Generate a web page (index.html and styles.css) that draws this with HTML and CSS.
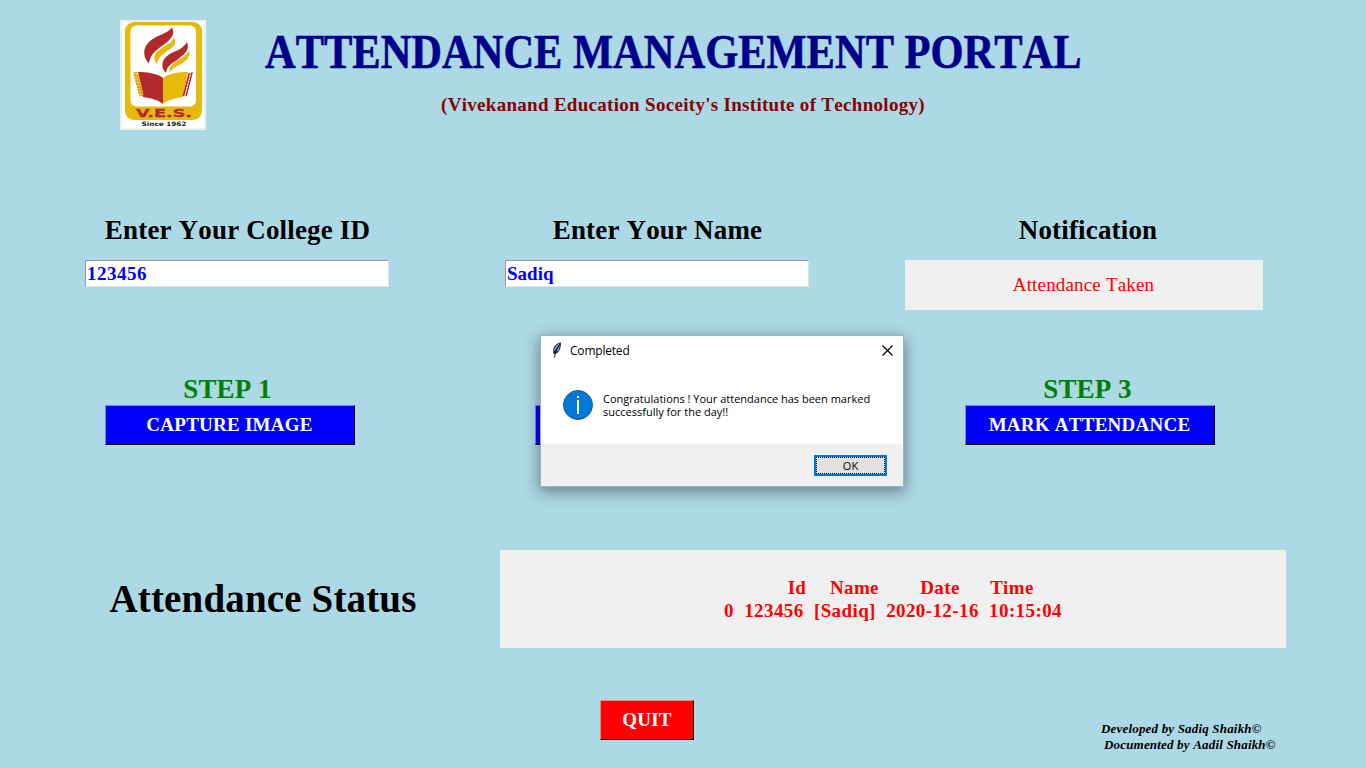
FILE: index.html
```html
<!DOCTYPE html>
<html lang="en">
<head>
<meta charset="utf-8">
<title>Attendance Management Portal</title>
<link rel="stylesheet" href="styles.css">
</head>
<body>
<main class="portal">
  <header class="header">
    <svg class="logo" viewBox="0 0 86 110" role="img" aria-label="V.E.S. Since 1962">
      <rect width="86" height="110" fill="#f0f0f0"/>
      <rect x="2" y="2" width="82" height="106" fill="#fff"/>
      <rect x="5" y="2" width="77" height="98" rx="9" fill="#e7ba09"/>
      <rect x="10.500" y="5.500" width="65.500" height="81" rx="6" fill="#fff"/>
      <g fill="#b3282e">
        <path d="M52 7.500C47 14 37 15 30 21C23 27 22 36 29 43.500C30 35 35 31 42 26C50 20 56 15 52 7.500z"/>
        <path d="M67 22C63 30 53 31 47 36C41 41 41 48 46 53C47 46 51 44 57 40C65 34 70 30 67 22z"/>
        <path d="M18 52c8 0 19 1 25 6v26c-5-4-12-6-20-7z"/>
      </g>
      <path fill="#e7ba09" d="M54 17.500C51 24 44 26 39 30C33 35 33 39 37 44C38 38 42 35 47 31C54 27 57 24 54 17.500zM69 30C66 37 60 38 55 42C50 46 49 49 50 53C52 48 56 47 61 44C67 40 71 37 69 30zM43 58c6-5 17-6 25-6l-5 25c-8 1-15 3-20 7z"/>
      <path d="M14.500 52l6 24M17.500 53l5 22" stroke="#e7ba09" stroke-width="2"/>
      <path d="M16 52l6 24M14 55l5 18" stroke="#b3282e" stroke-width="1" stroke-dasharray="1 2"/>
      <path d="M72 52l-6 24M69.500 53l-6 23" stroke="#b3282e" stroke-width="1.800"/>
      <path d="M71 52l-6 24" stroke="#fff" stroke-width="1" stroke-dasharray="2 1"/>
      <text class="logo-name" x="16" y="97" textLength="56" lengthAdjust="spacingAndGlyphs">V.E.S.</text>
      <text class="logo-since" x="21.500" y="106.300" textLength="45" lengthAdjust="spacingAndGlyphs">Since 1962</text>
    </svg>
    <div class="titles">
      <h1 class="title">ATTENDANCE MANAGEMENT PORTAL</h1>
      <p class="subtitle">(Vivekanand Education Soceity's Institute of Technology)</p>
    </div>
  </header>

  <section class="fields">
    <div class="field">
      <h2 class="label">Enter Your College ID</h2>
      <div class="entry">123456</div>
    </div>
    <div class="field">
      <h2 class="label">Enter Your Name</h2>
      <div class="entry entry-name">Sadiq</div>
    </div>
    <div class="field field-note">
      <h2 class="label">Notification</h2>
      <div class="note">Attendance Taken</div>
    </div>
  </section>

  <section class="steps">
    <div class="step"><h3 class="step-label">STEP 1</h3><button class="btn">CAPTURE IMAGE</button></div>
    <div class="step"><h3 class="step-label">&nbsp;</h3><button class="btn" aria-label="Step 2"></button></div>
    <div class="step"><h3 class="step-label">STEP 3</h3><button class="btn">MARK ATTENDANCE</button></div>
  </section>

  <section class="status">
    <h2 class="status-title">Attendance Status</h2>
    <pre class="status-box">            <span class="col-id">Id     </span>Name        Date      Time
0  123456  [Sadiq]  2020-12-16  10:15:04</pre>
  </section>

  <footer class="footer">
    <button class="btn quit">QUIT</button>
    <div class="credits"><p class="credit">Developed by Sadiq Shaikh©</p><p class="credit credit-doc">Documented by Aadil Shaikh©</p></div>
  </footer>

  <div class="dialog" role="dialog" aria-label="Completed">
    <div class="dialog-bar">
      <svg class="feather" viewBox="0 0 10 16">
        <path d="M9 .5C5 1 1.500 4 1.300 8L1 11l1.500 1.500L6 10.500C8 8 9.300 4 9 .5z" fill="#27364a"/>
        <path d="M8 1.500C5 2.500 2.500 5 2.200 9.500L4 7zM8 2.500L4.500 9.500 6.500 8.500z" fill="#7fb0ee"/>
        <path d="M7.500 2.500L4 8l-1.500 7.500" stroke="#111" stroke-width=".9" fill="none"/>
      </svg>
      <span class="dialog-title">Completed</span>
      <svg class="close" viewBox="0 0 11 11"><path d="M.5.5l10 10M10.500.5l-10 10" stroke="#000" stroke-width="1.100"/></svg>
    </div>
    <div class="dialog-body">
      <svg class="info" viewBox="0 0 30 30"><circle cx="15" cy="15" r="14.500" fill="#0078d7" stroke="#165c96"/><path d="M14 6h2v2h-2zM14 10h2v14h-2z" fill="#fff"/></svg>
      <p class="message">Congratulations ! Your attendance has been marked<br>successfully for the day!!</p>
    </div>
    <div class="dialog-actions"><button class="ok"><span class="ok-focus">OK</span></button></div>
  </div>
</main>
</body>
</html>
```
FILE: styles.css
```css
* { box-sizing: border-box; }
body { margin: 0; }
h1, h2, h3, p, pre { margin: 0; }
button { font: inherit; border-radius: 0; }

.portal {
  position: relative;
  width: 1366px;
  height: 768px;
  overflow: hidden;
  background: #add8e6;
  font-family: "Liberation Serif", serif;
  font-kerning: none;
}

.header { display: flex; height: 216px; padding: 20px 0 0 120px; }
.logo { width: 86px; height: 110px; flex: none; }
.logo-name { font: bold 11px "DejaVu Sans", sans-serif; fill: #b3282e; stroke: #b3282e; stroke-width: .3px; }
.logo-since { font: bold 6px "DejaVu Sans", sans-serif; fill: #222; }
.titles { padding: 8px 0 0 59px; }
.title {
  width: 930px;
  font-size: 48px;
  line-height: 48px;
  color: #00008b;
  white-space: nowrap;
  -webkit-text-stroke: .6px #00008b;
  transform: scaleX(.885);
  transform-origin: 0 0;
}
.subtitle { padding: 19px 0 0 176px; font-size: 19px; line-height: 19px; font-weight: bold; letter-spacing: .3px; color: #8b0000; white-space: nowrap; }

.fields { display: grid; grid-template-columns: 304px 304px 358px; column-gap: 116px; padding-left: 85px; height: 159px; }
.field-note { margin-left: -20px; width: 358px; }
.label { height: 44px; padding-left: 1px; text-align: center; font-size: 27px; line-height: 29px; letter-spacing: .17px; }
.field-note .label { padding-left: 8px; }
.entry {
  height: 27px;
  padding-left: 1px;
  border: 1px solid;
  border-color: #999 #e3e3e3 #e3e3e3 #999;
  background: #fff;
  color: #00f;
  font-size: 19px;
  line-height: 25px;
  font-weight: bold;
  letter-spacing: .5px;
}
.entry-name { letter-spacing: 0; }
.note { height: 50px; padding-right: 1px; background: #f0f0f0; color: #f00; font-size: 19px; line-height: 50px; letter-spacing: .17px; text-align: center; }

.steps { display: flex; gap: 180px; height: 175px; padding-left: 105px; }
.step { width: 250px; }
.step-label { height: 30px; padding-right: 5px; font-size: 27px; line-height: 29px; letter-spacing: .1px; text-align: center; color: #008000; }
.btn {
  display: block;
  width: 250px;
  height: 40px;
  padding: 0 1px 0 0;
  border: 1px solid;
  border-color: #7f7fff #000 #000 #7f7fff;
  background: #00f;
  color: #fff;
  font-size: 19px;
  line-height: 38px;
  font-weight: bold;
  letter-spacing: .25px;
}

.status { display: flex; height: 150px; }
.status-title { width: 500px; padding: 26px 0 0 109.5px; font-size: 39px; line-height: 46px; letter-spacing: .15px; }
.status-box {
  width: 786px;
  height: 98px;
  padding: 26px 0 0 224px;
  background: #f0f0f0;
  color: #f00;
  font: bold 19px/23px "Liberation Serif", serif;
  letter-spacing: .4px;
}
.col-id { margin-left: 2px; letter-spacing: .05px; }

.footer { display: flex; padding-left: 600px; }
.quit { width: 94px; padding: 0; background: #f00; border-color: #ff7f7f #000 #000 #ff7f7f; }
.credits { padding: 21px 0 0 407px; }
.credit { font-size: 13px; line-height: 16px; font-weight: bold; font-style: italic; letter-spacing: .18px; white-space: nowrap; }
.credit-doc { padding-left: 3px; }

.dialog {
  position: absolute;
  left: 540px;
  top: 335px;
  width: 364px;
  height: 152px;
  border: 1px solid #8fb9c8;
  background: #fff;
  box-shadow: 0 4px 14px 1px rgba(0, 0, 0, .4);
  font-family: "Open Sans", sans-serif;
  color: #000;
}
.dialog-bar { display: flex; align-items: center; height: 30px; padding: 0 10px 0 11px; }
.feather { width: 10px; height: 16px; margin-top: -3px; }
.dialog-title { margin: -2px 0 0 8px; font-size: 12px; letter-spacing: -.2px; }
.close { width: 11px; height: 11px; margin: -2px 0 0 auto; }
.dialog-body { display: flex; height: 78px; padding: 24px 0 0 22px; }
.info { width: 30px; height: 30px; flex: none; }
.message { padding: 2px 0 0 10px; font-size: 11px; line-height: 13px; white-space: nowrap; }
.dialog-actions { height: 42px; padding: 11px 16px 0 0; background: #f0f0f0; }
.ok { display: block; width: 73px; height: 21px; margin-left: auto; padding: 0; border: 2px solid #0078d7; background: #e1e1e1; color: #000; font-size: 11px; line-height: 15px; }
.ok-focus { display: block; height: 17px; border: 1px dotted #000; }
```
